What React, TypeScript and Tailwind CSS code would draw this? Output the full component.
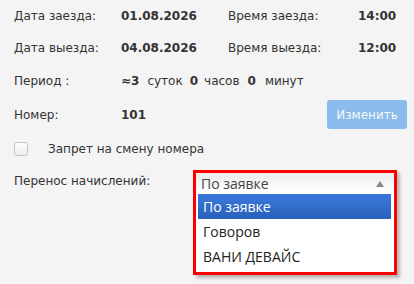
import React from "react";

const label = "text-[12px] text-[#333]";
const value = "text-[12px] font-bold text-[#333]";

export default function App() {
    return (
        <div
            className="w-[414px] h-[284px] bg-[#f4f4f4] overflow-hidden"
            style={{ fontFamily: '"DejaVu Sans", Verdana, sans-serif' }}
        >
            {/* dates */}
            <div className="flex h-[32px] items-center pl-[14px]">
                <span className={`${label} w-[107px]`}>Дата заезда:</span>
                <span className={`${value} w-[107px]`}>01.08.2026</span>
                <span className={`${label} w-[130px]`}>Время заезда:</span>
                <span className={value}>14:00</span>
            </div>
            <div className="flex h-[31px] items-center pl-[14px]">
                <span className={`${label} w-[107px]`}>Дата выезда:</span>
                <span className={`${value} w-[107px]`}>04.08.2026</span>
                <span className={`${label} w-[130px]`}>Время выезда:</span>
                <span className={value}>12:00</span>
            </div>

            {/* period */}
            <div className="flex h-[35px] items-center pl-[14px]">
                <span className={`${label} w-[107px]`}>Период :</span>
                <span className={value}>≈3</span>
                <span className={`${label} ml-[8px]`}>суток</span>
                <span className={`${value} ml-[7px]`}>0</span>
                <span className={`${label} ml-[6px]`}>часов</span>
                <span className={`${value} ml-[8px]`}>0</span>
                <span className={`${label} ml-[9px]`}>минут</span>
            </div>

            {/* room */}
            <div className="flex h-[33px] items-center pl-[14px] pr-[7px]">
                <span className={`${label} w-[107px]`}>Номер:</span>
                <span className={value}>101</span>
                <button className="ml-auto h-[29px] w-[80px] rounded-[3px] bg-[#8bbbea] text-[12px] text-white/95">
                    Изменить
                </button>
            </div>

            {/* checkbox */}
            <div className="flex h-[36px] items-center pl-[14px]">
                <span className="h-[14px] w-[14px] rounded-[3px] border border-[#c4c4c4] bg-[linear-gradient(#fff,#ededed)]" />
                <span className={`${label} ml-[20px]`}>Запрет на смену номера</span>
            </div>

            {/* transfer */}
            <div className="flex pl-[14px] pt-[3px]">
                <span className={`${label} w-[179px] pt-[2px]`}>Перенос начислений:</span>
                <div
                    className="w-[204px] border-[3px] border-[#ff0000] bg-white shadow-[3px_3px_3px_rgba(0,0,0,0.25)]"
                    style={{ fontFamily: '"Open Sans", "DejaVu Sans", sans-serif' }}
                >
                    <div className="flex h-[21px] items-center justify-between bg-[linear-gradient(#eee_20%,#fff_80%)] pl-[5px] pr-[10px] text-[14px] text-[#444]">
                        <span>По заявке</span>
                        <span className="h-0 w-0 border-x-[4px] border-b-[6px] border-x-transparent border-b-[#888]" />
                    </div>
                    <ul className="pb-[3px] pl-[2px] pr-[3px] text-[14px] text-[#222]">
                        <li className="flex h-[25px] items-center bg-[linear-gradient(#3875d7_20%,#2a62bc_90%)] pl-[5px] text-white">
                            По заявке
                        </li>
                        <li className="flex h-[25px] items-center pl-[5px]">Говоров</li>
                        <li className="flex h-[25px] items-center pl-[5px]">ВАНИ ДЕВАЙС</li>
                    </ul>
                </div>
            </div>
        </div>
    );
}
